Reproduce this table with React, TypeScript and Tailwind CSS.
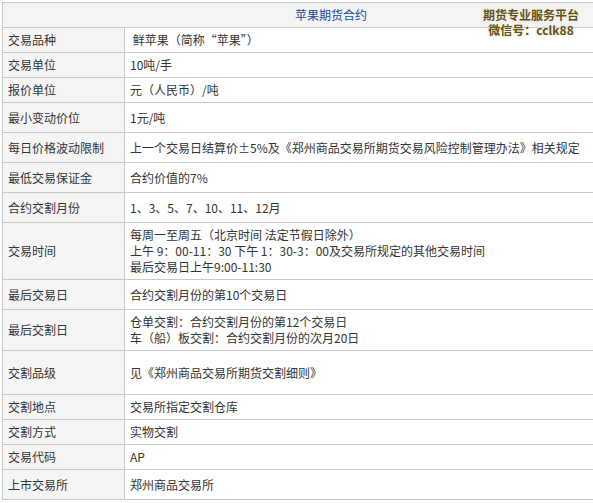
import React from "react";

type Row = { label: string; h: string; lines: string[] };

const rows: Row[] = [
  { label: "交易品种", h: "h-[25px]", lines: ["\u00a0鲜苹果（简称“苹果”）"] },
  { label: "交易单位", h: "h-[25px]", lines: ["10吨/手"] },
  { label: "报价单位", h: "h-[25px]", lines: ["元（人民币）/吨"] },
  { label: "最小变动价位", h: "h-[30px]", lines: ["1元/吨"] },
  {
    label: "每日价格波动限制",
    h: "h-[30px]",
    lines: ["上一个交易日结算价±5%及《郑州商品交易所期货交易风险控制管理办法》相关规定"],
  },
  { label: "最低交易保证金", h: "h-[30px]", lines: ["合约价值的7%"] },
  { label: "合约交割月份", h: "h-[30px]", lines: ["1、3、5、7、10、11、12月"] },
  {
    label: "交易时间",
    h: "h-[57px]",
    lines: [
      "每周一至周五（北京时间 法定节假日除外）",
      "上午 9：00-11：30 下午 1：30-3：00及交易所规定的其他交易时间",
      "最后交易日上午9:00-11:30",
    ],
  },
  { label: "最后交易日", h: "h-[30px]", lines: ["合约交割月份的第10个交易日"] },
  {
    label: "最后交割日",
    h: "h-[41px]",
    lines: ["仓单交割：合约交割月份的第12个交易日", "车（船）板交割：合约交割月份的次月20日"],
  },
  { label: "交割品级", h: "h-[44px]", lines: ["见《郑州商品交易所期货交割细则》"] },
  { label: "交割地点", h: "h-[25px]", lines: ["交易所指定交割仓库"] },
  { label: "交割方式", h: "h-[25px]", lines: ["实物交割"] },
  { label: "交易代码", h: "h-[25px]", lines: ["AP"] },
  { label: "上市交易所", h: "h-[30px]", lines: ["郑州商品交易所"] },
];

export default function App() {
  return (
    <div
      className="relative w-[593px] h-[503px] overflow-hidden bg-white text-[12px] text-[#333333]"
      style={{ fontFamily: '"Noto Sans CJK SC", "Noto Sans", sans-serif' }}
    >
      <div className="ml-[2px] mt-[2px] w-[658px] border-l border-t border-r border-[#c8c8c8]">
        <div className="h-[25px] border-b border-[#c8c8c8] bg-[#f4f4f4] flex items-center justify-center text-[#1b4aa3]">
          苹果期货合约
        </div>
        {rows.map((r) => (
          <div key={r.label} className={`flex ${r.h} border-b border-[#c8c8c8]`}>
            <div className="w-[122px] shrink-0 border-r border-[#c8c8c8] bg-[#f5f5f5] flex items-center pl-[5px]">
              {r.label}
            </div>
            <div className="flex-1 flex flex-col justify-center pl-[5px] leading-[16px]">
              {r.lines.map((l, i) => (
                <div key={i} className="whitespace-nowrap">
                  {l}
                </div>
              ))}
            </div>
          </div>
        ))}
      </div>
      <div
        className="absolute left-[471px] top-[7px] w-[120px] text-center font-bold text-[12px] leading-[15px] text-[#5e4f12]"
        style={{ textShadow: "0 0 2px #ffffff, 0 0 3px #e8e2c8" }}
      >
        <div>期货专业服务平台</div>
        <div>微信号：cclk88</div>
      </div>
    </div>
  );
}
